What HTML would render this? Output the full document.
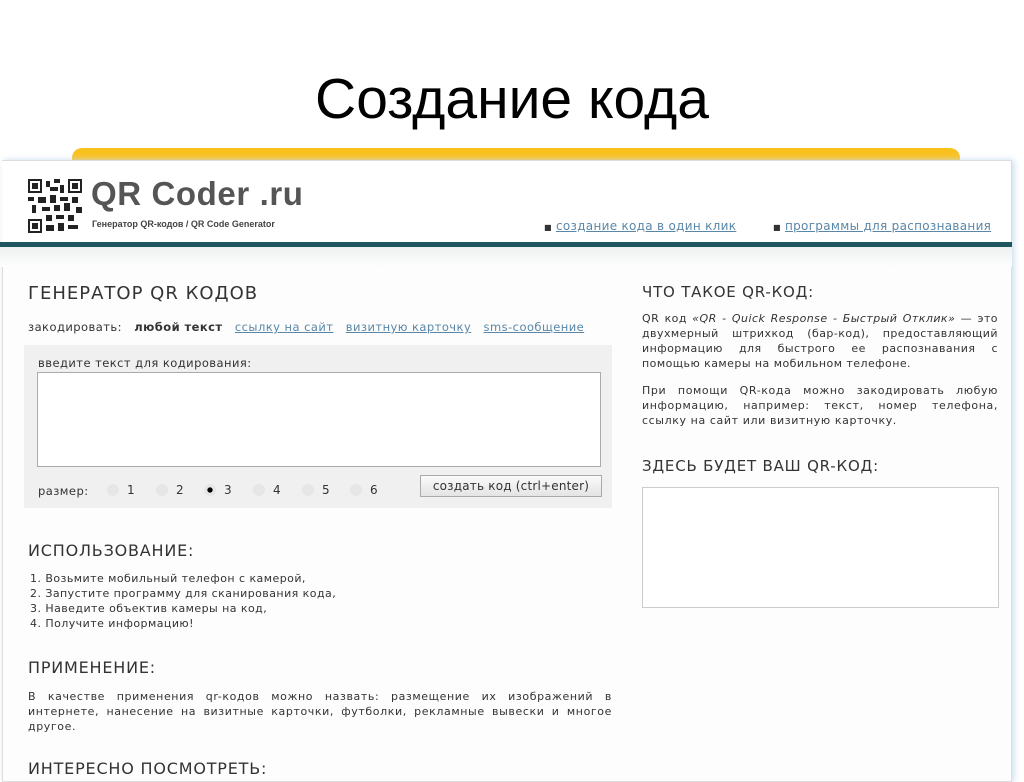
<!DOCTYPE html>
<html><head><meta charset="utf-8"><style>
body{margin:0;width:1024px;height:767px;overflow:hidden;background:#fff;font-family:"DejaVu Sans",sans-serif;position:relative}
.abs{position:absolute}
h1{position:absolute;left:0;width:1024px;top:66px;margin:0;text-align:center;font-weight:normal;font-size:57px;color:#000;font-family:"Liberation Sans",sans-serif}
.yellow{left:72px;top:148px;width:888px;height:20px;background:#f9c11e;border-radius:10px 10px 0 0}
.page{left:2px;top:160px;width:1008px;height:620px;background:#fdfdfd;border:1px solid #ddd;box-shadow:2px 0 6px #cde}
.t{color:#333;font-size:11px;letter-spacing:0.45px}
a{color:#5a87a8;text-decoration:underline}
.h{color:#333;font-size:16px;letter-spacing:0.8px}
.r{position:absolute;top:483px;font-size:12px;color:#333}
.r span{display:inline-block;width:12px;height:12px;border-radius:50%;background:#e6e6e6;vertical-align:-2px;margin-right:8px}
</style></head><body>
<h1>Создание кода</h1>
<div class="abs yellow"></div>
<div class="abs page"></div>
<div class="abs" style="left:2px;top:161px;width:1008px;height:82px;background:#fff"></div>
<svg class="abs" style="left:28px;top:179px" width="54" height="54" viewBox="0 0 27 27"><g fill="#222"><rect x="0" y="0" width="7" height="7"/><rect x="20" y="0" width="7" height="7"/><rect x="0" y="20" width="7" height="7"/></g><g fill="#fff"><rect x="1" y="1" width="5" height="5"/><rect x="21" y="1" width="5" height="5"/><rect x="1" y="21" width="5" height="5"/></g><g fill="#222"><rect x="2" y="2" width="3" height="3"/><rect x="22" y="2" width="3" height="3"/><rect x="2" y="22" width="3" height="3"/><rect x="9" y="1" width="2" height="3"/><rect x="13" y="0" width="3" height="2"/><rect x="11" y="4" width="4" height="2"/><rect x="16" y="3" width="2" height="4"/><rect x="0" y="9" width="3" height="2"/><rect x="5" y="9" width="4" height="3"/><rect x="11" y="8" width="3" height="4"/><rect x="16" y="9" width="4" height="2"/><rect x="22" y="9" width="3" height="3"/><rect x="2" y="13" width="2" height="4"/><rect x="7" y="14" width="4" height="2"/><rect x="13" y="13" width="3" height="3"/><rect x="18" y="12" width="3" height="4"/><rect x="24" y="14" width="3" height="3"/><rect x="9" y="18" width="3" height="3"/><rect x="14" y="18" width="4" height="2"/><rect x="20" y="18" width="3" height="3"/><rect x="9" y="23" width="4" height="3"/><rect x="15" y="22" width="3" height="4"/><rect x="20" y="23" width="5" height="2"/></g></svg>
<div class="abs" style="left:91px;top:175px;font-size:33px;color:#555;font-family:'Liberation Sans',sans-serif;font-weight:bold;letter-spacing:0.6px">QR Coder .ru</div>
<div class="abs" style="left:92px;top:219px;font-size:9px;color:#444;font-family:'Liberation Sans',sans-serif;font-weight:bold">Генератор QR-кодов / QR Code Generator</div>
<div class="abs t" style="left:544px;top:219px;font-size:12px;letter-spacing:0.3px"><span style="font-size:8px;color:#333">■</span> <a>создание кода в один клик</a></div>
<div class="abs t" style="left:773px;top:219px;font-size:12px;letter-spacing:0.3px"><span style="font-size:8px;color:#333">■</span> <a>программы для распознавания</a></div>
<div class="abs" style="left:0;top:242px;width:1012px;height:5px;background:#1f5560"></div>
<div class="abs" style="left:0;top:247px;width:1012px;height:20px;background:linear-gradient(#eef0f0,#fdfdfd)"></div>

<div class="abs h" style="left:28px;top:283px;font-size:18px;letter-spacing:1px">ГЕНЕРАТОР QR КОДОВ</div>
<div class="abs t" style="left:28px;top:320px;font-size:11.5px">закодировать: &nbsp;&nbsp;<b>любой текст</b> &nbsp;&nbsp;<a>ссылку на сайт</a> &nbsp;&nbsp;<a>визитную карточку</a> &nbsp;&nbsp;<a>sms-сообщение</a></div>
<div class="abs" style="left:24px;top:345px;width:588px;height:163px;background:#f0f0f0"></div>
<div class="abs t" style="left:38px;top:356px;font-size:11.5px">введите текст для кодирования:</div>
<div class="abs" style="left:37px;top:372px;width:562px;height:93px;background:#fff;border:1px solid #aaa"></div>
<div class="abs t" style="left:38px;top:484px;font-size:11.5px">размер:</div>
<div class="r" style="left:107px"><span></span>1</div>
<div class="r" style="left:156px"><span></span>2</div>
<div class="r" style="left:204px"><span style="background:radial-gradient(#000 28%,#e6e6e6 34%)"></span>3</div>
<div class="r" style="left:253px"><span></span>4</div>
<div class="r" style="left:302px"><span></span>5</div>
<div class="r" style="left:350px"><span></span>6</div>
<div class="abs t" style="left:420px;top:475px;width:180px;height:20px;border:1px solid #aaa;background:linear-gradient(#fafafa,#e4e4e4);text-align:center;line-height:20px;font-size:12px;letter-spacing:0.2px">создать код (ctrl+enter)</div>

<div class="abs h" style="left:28px;top:541px">ИСПОЛЬЗОВАНИЕ:</div>
<div class="abs t" style="left:30px;top:571px;line-height:15px">1. Возьмите мобильный телефон с камерой,<br>2. Запустите программу для сканирования кода,<br>3. Наведите объектив камеры на код,<br>4. Получите информацию!</div>
<div class="abs h" style="left:28px;top:658px">ПРИМЕНЕНИЕ:</div>
<div class="abs t" style="left:28px;top:689px;width:584px;line-height:15px;text-align:justify;letter-spacing:0.6px">В качестве применения qr-кодов можно назвать: размещение их изображений в интернете, нанесение на визитные карточки, футболки, рекламные вывески и многое другое.</div>
<div class="abs h" style="left:28px;top:759px">ИНТЕРЕСНО ПОСМОТРЕТЬ:</div>

<div class="abs h" style="left:642px;top:283px;font-size:15px">ЧТО ТАКОЕ QR-КОД:</div>
<div class="abs t" style="left:642px;top:311px;width:356px;line-height:15px;text-align:justify">QR код <i>«QR - Quick Response - Быстрый Отклик»</i> — это двухмерный штрихкод (бар-код), предоставляющий информацию для быстрого ее распознавания с помощью камеры на мобильном телефоне.</div>
<div class="abs t" style="left:642px;top:383px;width:356px;line-height:15px;text-align:justify;letter-spacing:0.6px">При помощи QR-кода можно закодировать любую информацию, например: текст, номер телефона, ссылку на сайт или визитную карточку.</div>
<div class="abs h" style="left:642px;top:457px;font-size:15px">ЗДЕСЬ БУДЕТ ВАШ QR-КОД:</div>
<div class="abs" style="left:642px;top:487px;width:355px;height:119px;border:1px solid #ccc;background:#fff"></div>
</body></html>
